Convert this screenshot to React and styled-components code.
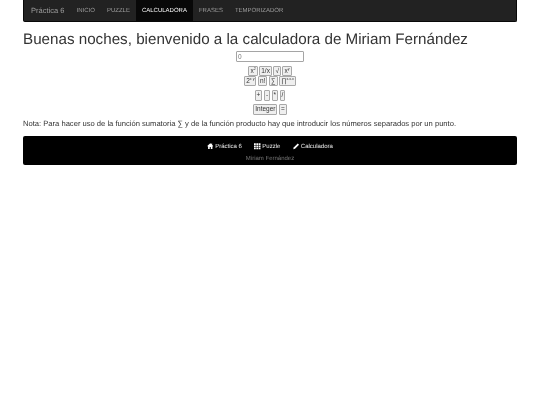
import React from 'react';
import styled, { createGlobalStyle } from 'styled-components';

const GlobalStyle = createGlobalStyle`
  html, body {
    margin: 0;
    padding: 0;
    background: #fff;
    font-family: "Liberation Sans", Arial, sans-serif;
    color: #333;
    text-rendering: geometricPrecision;
  }
`;

const Container = styled.div`
  width: 494px;
  margin: 0 auto;
  will-change: opacity;
`;

const Navbar = styled.nav`
  display: flex;
  height: 22px;
  background: #222;
  border: 0.5px solid #080808;
  border-top: 0;
  border-radius: 0 0 2px 2px;
  box-sizing: border-box;
  padding-left: 7px;
`;

const Brand = styled.span`
  font-size: 7.5px;
  line-height: 22px;
  color: #9d9d9d;
  margin-right: 6.2px;
`;

const NavItem = styled.span`
  font-size: 6px;
  line-height: 22px;
  padding: 0 6px;
  text-transform: uppercase;
  color: ${p => (p.$active ? '#fff' : '#9d9d9d')};
  background: ${p => (p.$active ? '#080808' : 'transparent')};
`;

const Title = styled.h1`
  font-size: 15.2px;
  font-weight: 400;
  line-height: 20px;
  margin: 8px 0 1px;
  white-space: nowrap;
`;

const Calculator = styled.div`
  display: flex;
  flex-direction: column;
  align-items: center;
`;

const Display = styled.input`
  width: 68px;
  height: 11px;
  box-sizing: border-box;
  border: 0.5px solid #a5a5a5;
  border-radius: 1px;
  padding: 0 1px;
  font-size: 6.5px;
  font-family: "Liberation Sans", Arial, sans-serif;
  color: #777;
  margin-bottom: ${p => p.$gap}px;
  outline: none;
`;

const KeyRow = styled.div`
  display: flex;
  justify-content: center;
  gap: 1.5px;
  height: ${p => p.$height || 10}px;
  margin-bottom: ${p => p.$gap || 0}px;
`;

const Key = styled.button`
  box-sizing: border-box;
  height: 100%;
  padding: 0 1px;
  min-width: 4px;
  border: 0.5px solid #a8a8a8;
  border-radius: 1px;
  background: #efefef;
  color: #333;
  font-size: 6.5px;
  line-height: 1;
  font-family: "Liberation Sans", Arial, sans-serif;

  sup {
    font-size: 3.6px;
    line-height: 0;
  }
`;

const Note = styled.p`
  font-size: 7.6px;
  line-height: 10px;
  margin: 3.5px 0 7.5px;
  white-space: nowrap;
`;

const Footer = styled.footer`
  height: 29px;
  background: #000;
  border-radius: 2px;
  display: flex;
  flex-direction: column;
  align-items: center;
  padding-top: 5.5px;
  box-sizing: border-box;
`;

const FooterLinks = styled.div`
  display: flex;
  gap: 12.5px;
  height: 10px;
  align-items: center;
  margin-bottom: 3px;
`;

const FooterLink = styled.span`
  display: flex;
  align-items: center;
  gap: 1.5px;
  font-size: 6px;
  color: #eee;
`;

const FooterName = styled.span`
  font-size: 6px;
  line-height: 8px;
  color: #777;
`;

const Icon = styled.svg`
  width: 6.5px;
  height: 6.5px;
  fill: #fff;
  flex: none;
`;

const HomeIcon = () => (
  <Icon viewBox="0 0 12 12">
    <path d="M6 0.5 0.5 5.7 1.4 6.5 2 6V11H5V7.5H7V11H10V6L10.6 6.5 11.5 5.7 9.5 3.8V1H8V2.4Z" />
  </Icon>
);

const GridIcon = () => (
  <Icon viewBox="0 0 12 12">
    <path d="M0 0.5H3.3V3.5H0ZM4.3 0.5H7.7V3.5H4.3ZM8.7 0.5H12V3.5H8.7ZM0 4.5H3.3V7.5H0ZM4.3 4.5H7.7V7.5H4.3ZM8.7 4.5H12V7.5H8.7ZM0 8.5H3.3V11.5H0ZM4.3 8.5H7.7V11.5H4.3ZM8.7 8.5H12V11.5H8.7Z" />
  </Icon>
);

const PencilIcon = () => (
  <Icon viewBox="0 0 12 12">
    <path d="M0.5 11.5 1.2 8.3 8.8 0.8 11.2 3.2 3.7 10.8Z" />
  </Icon>
);

const navItems = ['Inicio', 'Puzzle', 'Calculadora', 'Frases', 'Temporizador'];

const App = () => {
  return (
    <Container>
      <GlobalStyle />
      <Navbar>
        <Brand>Práctica 6</Brand>
        {navItems.map(item => (
          <NavItem key={item} $active={item === 'Calculadora'}>{item}</NavItem>
        ))}
      </Navbar>
      <Title>Buenas noches, bienvenido a la calculadora de Miriam Fernández</Title>
      <Calculator>
        <Display defaultValue="0" $gap={4} />
        <KeyRow>
          <Key>x<sup>2</sup></Key>
          <Key>1/x</Key>
          <Key>√</Key>
          <Key>x<sup>y</sup></Key>
        </KeyRow>
        <KeyRow $gap={4}>
          <Key>2<sup>x y</sup></Key>
          <Key>n!</Key>
          <Key>∑</Key>
          <Key>∏<sup>x.x.x</sup></Key>
        </KeyRow>
        <KeyRow $height={11} $gap={3}>
          <Key>+</Key>
          <Key>-</Key>
          <Key>*</Key>
          <Key>/</Key>
        </KeyRow>
        <KeyRow $height={11}>
          <Key>Integer</Key>
          <Key>=</Key>
        </KeyRow>
      </Calculator>
      <Note>Nota: Para hacer uso de la función sumatoria ∑ y de la función producto hay que introducir los números separados por un punto.</Note>
      <Footer>
        <FooterLinks>
          <FooterLink><HomeIcon />Práctica 6</FooterLink>
          <FooterLink><GridIcon />Puzzle</FooterLink>
          <FooterLink><PencilIcon />Calculadora</FooterLink>
        </FooterLinks>
        <FooterName>Miriam Fernández</FooterName>
      </Footer>
    </Container>
  );
};

export default App;
